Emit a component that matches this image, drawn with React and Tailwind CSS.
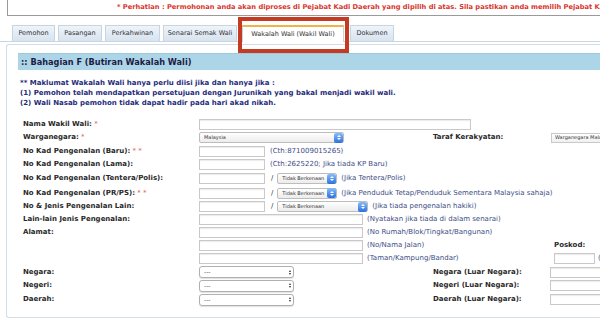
import React from "react";

const F = { fontFamily: '"DejaVu Sans", Verdana, sans-serif' };

function Input({ w }) {
  return (
    <div
      className="h-[11px] shrink-0 border border-[#c9c9c9] bg-white shadow-[inset_0_1px_1px_rgba(0,0,0,0.08)]"
      style={{ width: w }}
    />
  );
}

function BlueSelect({ w, text }) {
  return (
    <div
      className="h-[11px] shrink-0 flex items-center justify-between rounded-[2px] border border-[#bdbdbd] bg-gradient-to-b from-white to-[#ececec] pl-[4px]"
      style={{ width: w }}
    >
      <span className="text-[5px] leading-none text-[#333] whitespace-nowrap">{text}</span>
      <span className="h-[10px] w-[9px] rounded-[2px] bg-gradient-to-b from-[#86bdf7] to-[#2c6fe0] flex flex-col items-center justify-center gap-[1px]">
        <span className="block w-0 h-0 border-l-[2px] border-r-[2px] border-b-[2px] border-l-transparent border-r-transparent border-b-white" />
        <span className="block w-0 h-0 border-l-[2px] border-r-[2px] border-t-[2px] border-l-transparent border-r-transparent border-t-white" />
      </span>
    </div>
  );
}

function GraySelect({ w }) {
  return (
    <div
      className="h-[12px] shrink-0 flex items-center justify-between rounded-[3px] border border-[#b0b0b0] bg-white shadow-[0_1px_1px_rgba(0,0,0,0.12)] pl-[4px] pr-[2px]"
      style={{ width: w }}
    >
      <span className="text-[6px] leading-none text-[#444]">---</span>
      <span className="flex flex-col items-center gap-[1px]">
        <span className="block w-0 h-0 border-l-[1.5px] border-r-[1.5px] border-b-[2px] border-l-transparent border-r-transparent border-b-[#333]" />
        <span className="block w-0 h-0 border-l-[1.5px] border-r-[1.5px] border-t-[2px] border-l-transparent border-r-transparent border-t-[#333]" />
      </span>
    </div>
  );
}

function Hint({ children, className = "" }) {
  return (
    <span className={"text-[7px] leading-none text-[#3d4d85] whitespace-nowrap " + className}>
      {children}
    </span>
  );
}

function Label({ children, star }) {
  return (
    <div className="w-[181px] shrink-0 pl-[5px] text-[7px] font-bold leading-none text-[#2a2a2a] whitespace-nowrap">
      {children}
      {star && <span className="text-[#e06060] font-normal"> {star}</span>}
    </div>
  );
}

function Row({ h, children }) {
  return (
    <div className="flex items-center" style={{ height: h }}>
      {children}
    </div>
  );
}

function RLabel({ children, ml, w }) {
  return (
    <span
      className="shrink-0 text-[7px] font-bold leading-none text-[#2a2a2a] whitespace-nowrap"
      style={{ marginLeft: ml, width: w }}
    >
      {children}
    </span>
  );
}

export default function App() {
  const tabs = [
    ["Pemohon", 43],
    ["Pasangan", 44],
    ["Perkahwinan", 55],
    ["Senarai Semak Wali", 74],
  ];
  return (
    <div className="w-[600px] h-[328px] bg-white overflow-hidden" style={F}>
      {/* top notice box */}
      <div className="ml-[7px] h-[16px] border-l border-b border-[#9a9a9a] pl-[109px] flex items-center overflow-hidden">
        <span className="text-[6.7px] font-bold text-[#d8352c] whitespace-nowrap leading-none">
          * Perhatian : Permohonan anda akan diproses di Pejabat Kadi Daerah yang dipilih di atas. Sila pastikan anda memilih Pejabat Kadi Daerah
        </span>
      </div>

      {/* tabs */}
      <div className="mt-[10px] flex items-end border-b border-[#c9d5e0] pl-[12px] h-[16px]">
        {tabs.map(([t, w], i) => (
          <div
            key={t}
            className="h-[16px] flex items-center justify-center border border-b-0 border-[#c8d4e0] bg-gradient-to-b from-[#eef4fa] to-[#d7e3ef] text-[6.5px] text-[#333] whitespace-nowrap"
            style={{ width: w, marginRight: i === 3 ? 5 : 3 }}
          >
            {t}
          </div>
        ))}
        <div className="relative h-[17px] w-[102px] mr-[6px] -mb-[1px] flex items-center justify-center border border-b-0 border-[#c8d4e0] border-t-2 border-t-[#f0b34a] bg-white text-[6.5px] text-[#333] whitespace-nowrap">
          Wakalah Wali (Wakil Wali)
          <div className="absolute -left-[5px] -right-[6px] -top-[10px] -bottom-[11px] border-[4px] border-[#c53a23]" />
        </div>
        <div className="h-[16px] w-[44px] flex items-center justify-center border border-b-0 border-[#c8d4e0] bg-gradient-to-b from-[#eef4fa] to-[#d7e3ef] text-[6.5px] text-[#333]">
          Dokumen
        </div>
      </div>

      {/* panel */}
      <div className="ml-[6px] mt-[2px] h-[274px] border border-r-0 border-[#d2dee7] rounded-l-[3px] pl-[11px] pt-[8px]">
        <div className="h-[17px] bg-[#acd5e8] border-t border-[#9cc8dc] flex items-center pl-[3px]">
          <span className="text-[8.2px] font-bold text-[#1c1c44] whitespace-nowrap leading-none">
            :: Bahagian F (Butiran Wakalah Wali)
          </span>
        </div>

        <div className="mt-[8px] pl-[2px] text-[7px] font-bold text-[#1f2c7c] leading-[10px] whitespace-nowrap">
          <div>** Maklumat Wakalah Wali hanya perlu diisi jika dan hanya jika :</div>
          <div>(1) Pemohon telah mendapatkan persetujuan dengan Jurunikah yang bakal menjadi wakil wali.</div>
          <div>(2) Wali Nasab pemohon tidak dapat hadir pada hari akad nikah.</div>
        </div>

        <div className="mt-[9px]">
          <Row h={14}>
            <Label star="*">Nama Wakil Wali:</Label>
            <Input w={272} />
          </Row>
          <Row h={13}>
            <Label star="*">Warganegara:</Label>
            <BlueSelect w={145} text="Malaysia" />
            <RLabel ml={89} w={118}>Taraf Kerakyatan:</RLabel>
            <div className="h-[10px] w-[60px] shrink-0 border border-[#c9c9c9] bg-gradient-to-b from-white to-[#f0f0f0] pl-[3px] flex items-center text-[5px] text-[#333] whitespace-nowrap overflow-hidden">
              Warganegara Malaysia
            </div>
          </Row>
          <Row h={14}>
            <Label star="* *">No Kad Pengenalan (Baru):</Label>
            <Input w={66} />
            <Hint className="ml-[5px]">(Cth:871009015265)</Hint>
          </Row>
          <Row h={13}>
            <Label>No Kad Pengenalan (Lama):</Label>
            <Input w={66} />
            <Hint className="ml-[5px]">(Cth:2625220; Jika tiada KP Baru)</Hint>
          </Row>
          <Row h={15}>
            <Label>No Kad Pengenalan (Tentera/Polis):</Label>
            <Input w={66} />
            <span className="text-[7px] text-[#333] ml-[6px] mr-[4px] leading-none">/</span>
            <BlueSelect w={60} text="Tidak Berkenaan" />
            <Hint className="ml-[4px]">(Jika Tentera/Polis)</Hint>
          </Row>
          <Row h={14}>
            <Label star="* *">No Kad Pengenalan (PR/PS):</Label>
            <Input w={66} />
            <span className="text-[7px] text-[#333] ml-[6px] mr-[4px] leading-none">/</span>
            <BlueSelect w={60} text="Tidak Berkenaan" />
            <Hint className="ml-[4px]">(Jika Penduduk Tetap/Penduduk Sementara Malaysia sahaja)</Hint>
          </Row>
          <Row h={13}>
            <Label>No &amp; Jenis Pengenalan Lain:</Label>
            <Input w={66} />
            <span className="text-[7px] text-[#333] ml-[6px] mr-[4px] leading-none">/</span>
            <BlueSelect w={91} text="Tidak Berkenaan" />
            <Hint className="ml-[4px]">(Jika tiada pengenalan hakiki)</Hint>
          </Row>
          <Row h={13}>
            <Label>Lain-lain Jenis Pengenalan:</Label>
            <Input w={164} />
            <Hint className="ml-[4px]">(Nyatakan jika tiada di dalam senarai)</Hint>
          </Row>
          <Row h={13}>
            <Label>Alamat:</Label>
            <Input w={164} />
            <Hint className="ml-[4px]">(No Rumah/Blok/Tingkat/Bangunan)</Hint>
          </Row>
          <Row h={12}>
            <Label> </Label>
            <Input w={164} />
            <Hint className="ml-[4px] w-[187px] shrink-0">(No/Nama Jalan)</Hint>
            <RLabel ml={0}>Poskod:</RLabel>
          </Row>
          <Row h={14}>
            <Label> </Label>
            <Input w={164} />
            <Hint className="ml-[4px] w-[187px] shrink-0">(Taman/Kampung/Bandar)</Hint>
            <Input w={41} />
            <Hint className="ml-[3px]">(</Hint>
          </Row>
          <Row h={14}>
            <Label>Negara:</Label>
            <GraySelect w={95} />
            <RLabel ml={139} w={117}>Negara (Luar Negara):</RLabel>
            <Input w={60} />
          </Row>
          <Row h={13}>
            <Label>Negeri:</Label>
            <GraySelect w={95} />
            <RLabel ml={139} w={117}>Negeri (Luar Negara):</RLabel>
            <Input w={60} />
          </Row>
          <Row h={15}>
            <Label>Daerah:</Label>
            <GraySelect w={95} />
            <RLabel ml={139} w={117}>Daerah (Luar Negara):</RLabel>
            <Input w={60} />
          </Row>
        </div>
      </div>
    </div>
  );
}
